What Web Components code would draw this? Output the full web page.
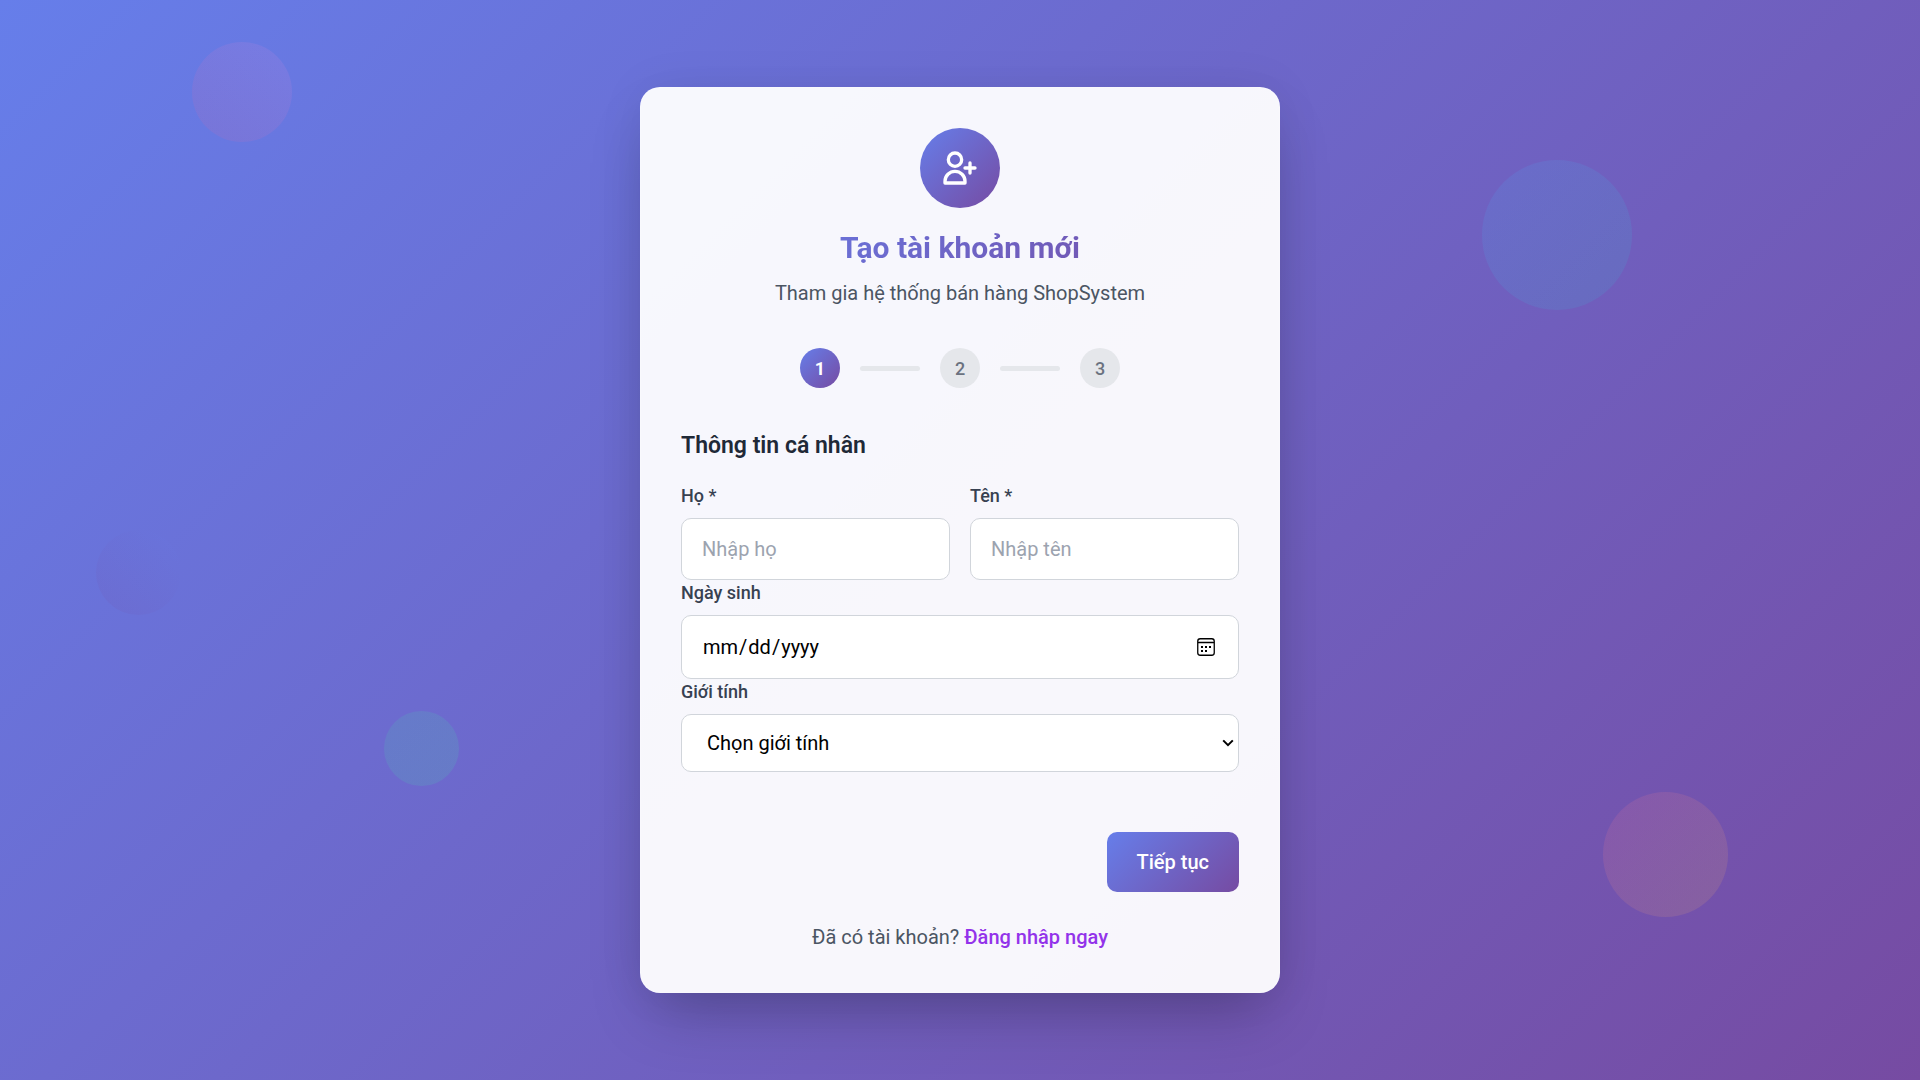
<!DOCTYPE html>
<html lang="vi">
<head>
<meta charset="utf-8">
<title>Tạo tài khoản mới</title>
<style>
  body { margin: 0; font-family: Roboto, "Noto Sans", sans-serif; font-size: 20px; line-height: 30px; color: #1f2937; }
</style>
</head>
<body>
<register-page>
  <register-card heading="Tạo tài khoản mới" subheading="Tham gia hệ thống bán hàng ShopSystem">
    <step-progress current="1" total="3"></step-progress>
    <personal-form></personal-form>
    <login-hint></login-hint>
  </register-card>
</register-page>

<script>
const BRAND = 'linear-gradient(135deg, #667eea 0%, #764ba2 100%)';

const svgUrl = (svg) => `url("data:image/svg+xml,${encodeURIComponent(svg)}")`;

const CALENDAR = svgUrl(`<svg xmlns="http://www.w3.org/2000/svg" width="20" height="20" viewBox="0 0 20 20">
  <rect x="1.75" y="1.75" width="16.5" height="16.5" rx="2.5" fill="none" stroke="#000" stroke-width="1.3"/>
  <path d="M2 5.5h16" stroke="#000" stroke-width="1.3"/>
  <path d="M5 9h2v2H5zM9 9h2v2H9zM13 9h2v2h-2zM5 13h2v2H5zM9 13h2v2H9z"/></svg>`);

const CHEVRON = svgUrl(`<svg xmlns="http://www.w3.org/2000/svg" width="12" height="8" viewBox="0 0 12 8">
  <path d="M1.2 1.4L6 6.2l4.8-4.8" fill="none" stroke="#000" stroke-width="2"/></svg>`);

class BaseElement extends HTMLElement {
  connectedCallback() {
    if (this.shadowRoot) return;
    this.attachShadow({ mode: 'open' }).innerHTML =
      `<style>*, ::before, ::after { box-sizing: border-box; }</style>` + this.render();
  }
}

class RegisterPage extends BaseElement {
  render() {
    return `<style>
      :host { display: flex; align-items: center; justify-content: center; position: relative;
        min-height: 100vh; padding: 20px; box-sizing: border-box; overflow: hidden; background: ${BRAND}; }
      .shapes { position: absolute; inset: 0; }
      .shapes i { position: absolute; border-radius: 50%; opacity: .14; }
      .a { width: 100px; height: 100px; left: 10%; top: 42px; background: linear-gradient(45deg, #d8609a, #d890e8); }
      .b { width: 150px; height: 150px; right: 15%; top: 160px; background: linear-gradient(135deg, #4facfe, #30c0d0); }
      .c { width: 85px; height: 85px; left: 5%; top: 530px; background: linear-gradient(45deg, #764ba2, #667eea); }
      .d { width: 75px; height: 75px; left: 20%; top: 711px; background: linear-gradient(135deg, #43d9ab, #43e9a7); }
      .e { width: 125px; height: 125px; right: 10%; top: 792px; background: linear-gradient(135deg, #fa709a, #f4c060); }
      ::slotted(*) { position: relative; }
    </style>
    <div class="shapes" aria-hidden="true"><i class="a"></i><i class="b"></i><i class="c"></i><i class="d"></i><i class="e"></i></div>
    <slot></slot>`;
  }
}

class RegisterCard extends BaseElement {
  render() {
    return `<style>
      :host { display: block; width: 100%; max-width: 640px; box-sizing: border-box; padding: 40px;
        border: 1px solid rgba(255,255,255,.2); border-radius: 20px; background: rgba(255,255,255,.95);
        box-shadow: 0 31px 62px -15px rgba(0,0,0,.25), 0 0 50px rgba(0,0,0,.06); }
      header { display: flex; flex-direction: column; text-align: center; margin-bottom: 40px; }
      .logo { display: grid; place-items: center; align-self: center; width: 80px; height: 80px;
        margin-bottom: 20px; border-radius: 50%; background: ${BRAND}; }
      h1 { margin: 0 0 10px; font-size: 30px; line-height: 40px; font-weight: 700;
        background: ${BRAND}; background-clip: text; -webkit-background-clip: text; color: transparent; }
      p { margin: 0; color: #4b5563; }
    </style>
    <header>
      <div class="logo">
        <svg width="40" height="40" viewBox="0 0 24 24" fill="none" stroke="#fff" stroke-width="2" stroke-linecap="round" stroke-linejoin="round" aria-hidden="true">
          <path d="M18 9v3m0 0v3m0-3h3m-3 0h-3m-2-5a4 4 0 11-8 0 4 4 0 018 0zM3 20a6 6 0 0112 0v1H3v-1z"/>
        </svg>
      </div>
      <h1>${this.getAttribute('heading')}</h1>
      <p>${this.getAttribute('subheading')}</p>
    </header>
    <slot></slot>`;
  }
}

class StepProgress extends BaseElement {
  render() {
    const current = Number(this.getAttribute('current'));
    const total = Number(this.getAttribute('total'));
    const steps = Array.from({ length: total }, (_, i) =>
      `<li${i + 1 === current ? ' class="active" aria-current="step"' : ''}>${i + 1}</li>`)
      .join('<li class="line" role="presentation"></li>');
    return `<style>
      :host { display: block; margin-bottom: 40px; }
      ol { display: flex; justify-content: center; align-items: center; gap: 20px; margin: 0; padding: 0; list-style: none; }
      li { display: grid; place-items: center; width: 40px; height: 40px; border-radius: 50%;
        background: #e5e7eb; color: #6b7280; font-size: 18px; line-height: 25px; font-weight: 500; }
      .active { background: ${BRAND}; color: #fff; font-weight: 700; }
      .line { width: 60px; height: 5px; border-radius: 5px; }
    </style><ol>${steps}</ol>`;
  }
}

class FormField extends BaseElement {
  render() {
    const type = this.getAttribute('type');
    const hint = this.getAttribute('hint') || '';
    const control = type === 'select'
      ? `<select id="control"><option>${hint}</option><option>Nam</option><option>Nữ</option><option>Khác</option></select>`
      : `<input id="control" type="${type}" placeholder="${hint}">`;
    return `<style>
      :host { display: block; min-width: 0; }
      label { display: block; margin-bottom: 10px; font-size: 18px; line-height: 25px; font-weight: 500; color: #374151; }
      input, select { display: block; width: 100%; margin: 0; padding: 15px 20px; border: 1px solid #d1d5db;
        border-radius: 10px; background: #fff; color: #000; font-family: inherit; font-size: 20px; line-height: 30px; }
      input::placeholder { color: #9ca3af; opacity: 1; }
      input::-webkit-calendar-picker-indicator { background: ${CALENDAR} center / 20px 20px no-repeat; }
      select { appearance: none; height: 58px; padding-left: 25px; line-height: 26px;
        background: #fff ${CHEVRON} right 4px center no-repeat; }
    </style>
    <label for="control">${this.getAttribute('label')}</label>${control}`;
  }
}

class PrimaryButton extends BaseElement {
  render() {
    return `<style>
      :host { display: inline-block; }
      button { display: block; margin: 0; padding: 15px 30px; border: 0; border-radius: 10px; background: ${BRAND};
        color: #fff; font-family: inherit; font-size: 20px; line-height: 30px; font-weight: 500; cursor: pointer; }
    </style><button type="button"><slot></slot></button>`;
  }
}

class PersonalForm extends BaseElement {
  render() {
    return `<style>
      :host { display: block; margin-bottom: 30px; }
      h2 { margin: 0 0 20px; font-size: 23px; line-height: 35px; font-weight: 600; color: #1f2937; }
      .row { display: grid; grid-template-columns: 1fr 1fr; gap: 20px; }
      .actions { display: flex; justify-content: flex-end; margin-top: 60px; }
    </style>
    <form>
      <h2>Thông tin cá nhân</h2>
      <div class="row">
        <form-field type="text" label="Họ *" hint="Nhập họ"></form-field>
        <form-field type="text" label="Tên *" hint="Nhập tên"></form-field>
      </div>
      <form-field type="date" label="Ngày sinh"></form-field>
      <form-field type="select" label="Giới tính" hint="Chọn giới tính"></form-field>
      <div class="actions"><primary-button>Tiếp tục</primary-button></div>
    </form>`;
  }
}

class LoginHint extends BaseElement {
  render() {
    return `<style>
      :host { display: block; text-align: center; color: #4b5563; }
      p { margin: 0; }
      a { color: #9333ea; font-weight: 500; text-decoration: none; }
    </style><p>Đã có tài khoản? <a href="#login">Đăng nhập ngay</a></p>`;
  }
}

customElements.define('register-page', RegisterPage);
customElements.define('register-card', RegisterCard);
customElements.define('step-progress', StepProgress);
customElements.define('form-field', FormField);
customElements.define('primary-button', PrimaryButton);
customElements.define('personal-form', PersonalForm);
customElements.define('login-hint', LoginHint);
</script>
</body>
</html>
